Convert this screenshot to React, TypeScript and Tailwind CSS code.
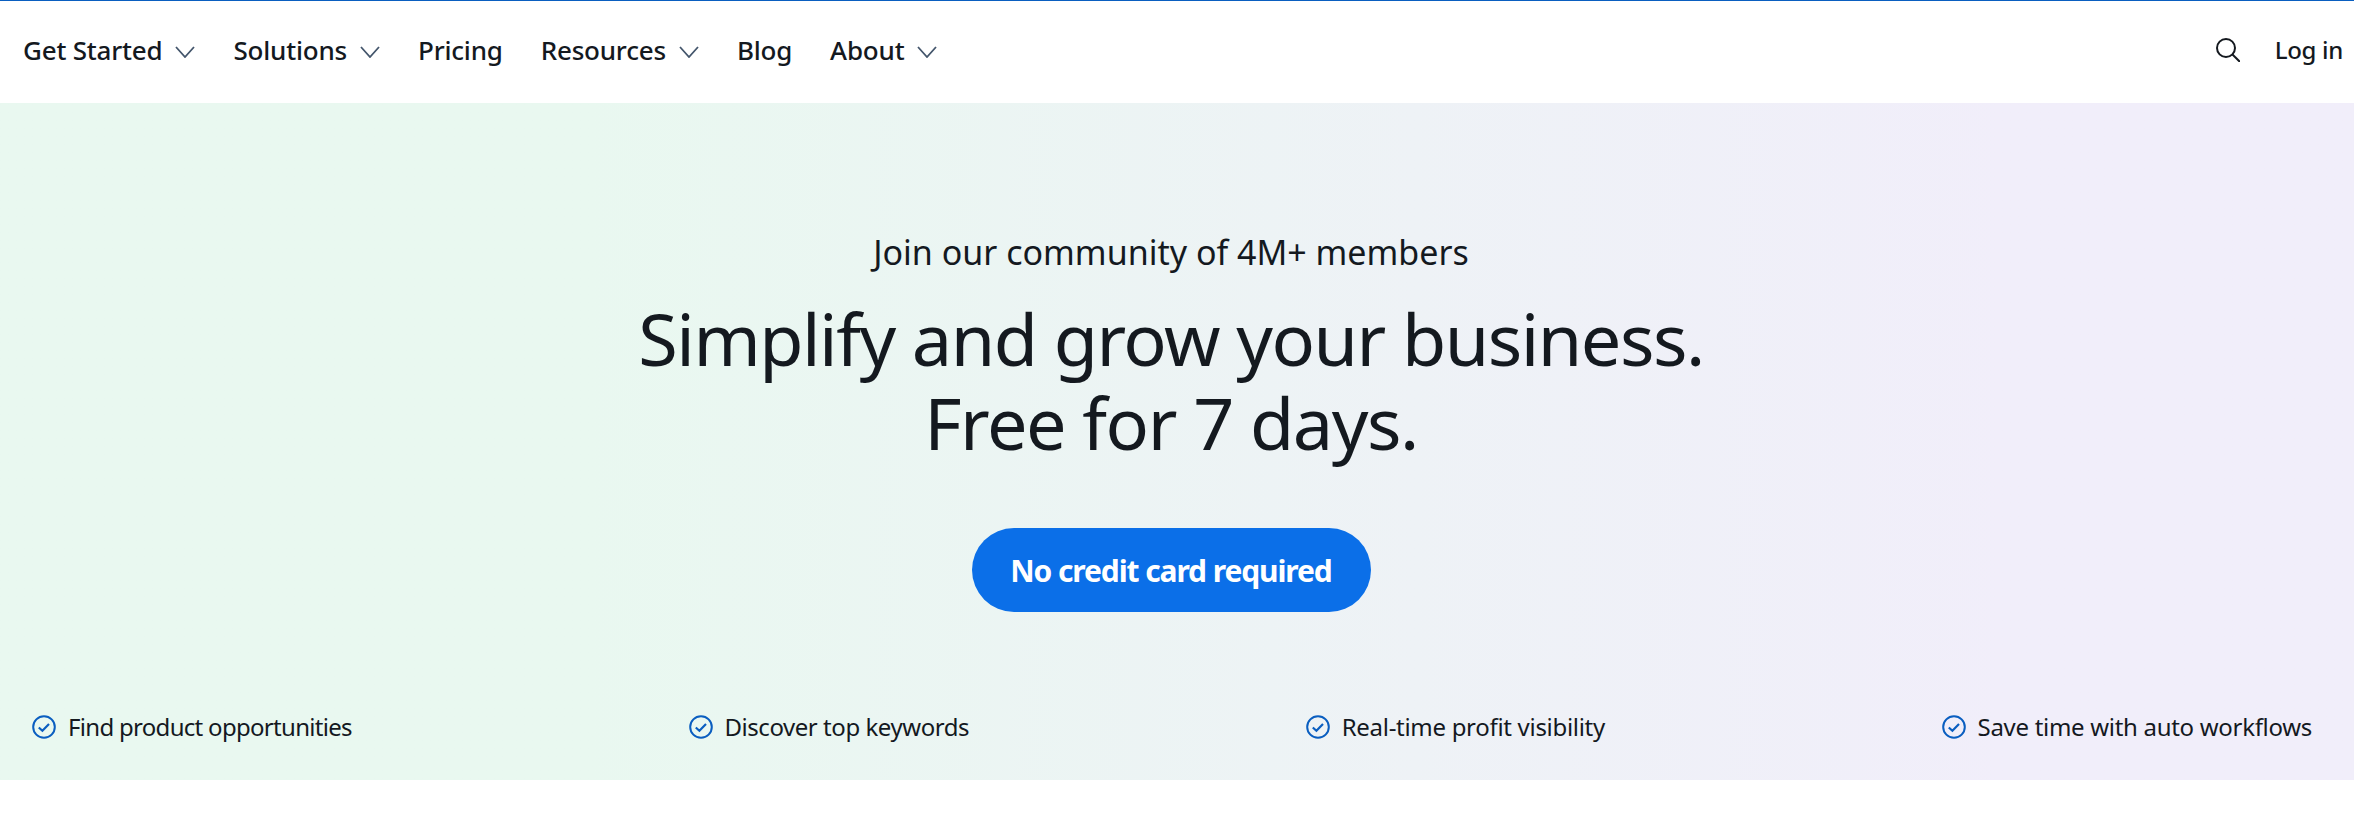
const font = "font-['Noto_Sans',sans-serif]"

function Chevron() {
  return (
    <svg width="20" height="12" viewBox="0 0 20 12" fill="none" stroke="#44566c" strokeWidth="1.8" className="ml-[13px] mt-[3px]">
      <path d="M1 1l9 10 9-10" />
    </svg>
  )
}

function Check() {
  return (
    <svg width="24" height="24" viewBox="0 0 24 24" fill="none" stroke="#0a5ec0" className="shrink-0">
      <circle cx="12" cy="12" r="10.8" strokeWidth="2" />
      <path d="M6.8 12.5l3.6 3.2L17 9" strokeWidth="2.2" />
    </svg>
  )
}

function NavItem({ label, menu }: { label: string; menu?: boolean }) {
  return (
    <a className="flex items-center text-[26px] font-medium tracking-[-0.2px] text-[#14191f]">
      {label}
      {menu && <Chevron />}
    </a>
  )
}

// Tracking differs per label so each one keeps the width it has in the design.
const features = [
  { label: 'Find product opportunities', tracking: 'tracking-[-0.7px]' },
  { label: 'Discover top keywords', tracking: 'tracking-[-0.45px]' },
  { label: 'Real-time profit visibility', tracking: 'tracking-[-0.3px]' },
  { label: 'Save time with auto workflows', tracking: 'tracking-[-0.3px]' },
]

export default function App() {
  return (
    <div className={`${font} min-h-[830px] bg-white`}>
      <div className="h-px bg-[#0a5ec0]" />
      <nav className="flex h-[102px] items-center justify-between pb-[4px] pl-[23px] pr-[11px]">
        <div className="flex items-center gap-[38px]">
          <NavItem label="Get Started" menu />
          <NavItem label="Solutions" menu />
          <NavItem label="Pricing" />
          <NavItem label="Resources" menu />
          <NavItem label="Blog" />
          <NavItem label="About" menu />
        </div>
        <div className="flex items-center gap-[35px]">
          <svg width="24" height="24" viewBox="0 0 24 24" fill="none" stroke="#14191f" strokeWidth="2">
            <circle cx="10" cy="10" r="9" />
            <path d="M16.5 16.5L24 24" />
          </svg>
          <a className="text-[24px] font-medium tracking-[-0.3px] text-[#14191f]">Log in</a>
        </div>
      </nav>
      <section className="flex h-[677px] flex-col bg-gradient-to-r from-[#e9f8f0] from-[25%] via-[#eef2f6] via-[60%] to-[#f1eefa] to-[85%] pr-3">
        <div className="flex flex-col items-center pt-[126px]">
          <p className="text-[34px] leading-[46px] text-[#14191f]">Join our community of 4M+ members</p>
          <h1 className="mt-[21px] text-center text-[72px] leading-[84px] tracking-[-1.5px] text-[#14191f]">
            Simplify and grow your business.
            <br />
            Free for 7 days.
          </h1>
          <button className="mt-[64px] h-[84px] w-[399px] rounded-[42px] bg-[#0b6fe8] text-[30px] font-bold tracking-[-1.1px] text-white">
            No credit card required
          </button>
        </div>
        <ul className="mt-auto mb-[37px] flex justify-between pl-[32px] pr-[30px]">
          {features.map((f) => (
            <li key={f.label} className={`flex items-center gap-[12px] text-[24px] leading-[32px] text-[#14191f] ${f.tracking}`}>
              <Check />
              {f.label}
            </li>
          ))}
        </ul>
      </section>
    </div>
  )
}
